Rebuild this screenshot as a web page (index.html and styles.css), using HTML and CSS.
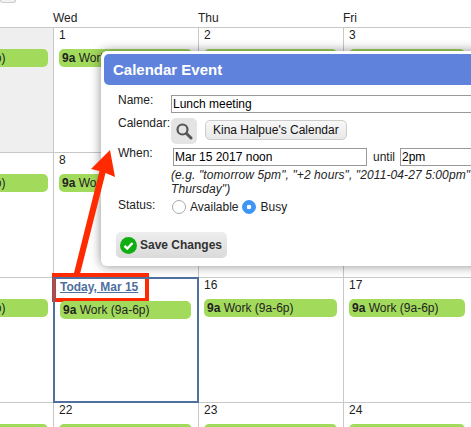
FILE: index.html
```html
<!DOCTYPE html>
<html lang="en">
<head>
  <meta charset="UTF-8" />
  <title>Calendar Event</title>
  <link rel="stylesheet" href="styles.css">
</head>

<body>
  <!-- MONTH GRID -->
  <div class="month">
    <div class="head"><div class="stub"></div></div>
    <div class="head day-name">Wed</div>
    <div class="head day-name">Thu</div>
    <div class="head day-name">Fri</div>

    <div class="cell first past"><div class="event"><b>9a</b> Work (9a-6p)</div></div>
    <div class="cell"><div class="num">1</div><div class="event"><b>9a</b> Work (9a-6p)</div></div>
    <div class="cell"><div class="num">2</div><div class="event"><b>9a</b> Work (9a-6p)</div></div>
    <div class="cell"><div class="num">3</div><div class="event"><b>9a</b> Work (9a-6p)</div></div>

    <div class="cell first"><div class="event"><b>9a</b> Work (9a-6p)</div></div>
    <div class="cell"><div class="num">8</div><div class="event"><b>9a</b> Work (9a-6p)</div></div>
    <div class="cell"><div class="num">9</div></div>
    <div class="cell"><div class="num">10</div></div>

    <div class="cell first"><div class="event"><b>9a</b> Work (9a-6p)</div></div>
    <div class="cell today"><a class="num today-link" href="#">Today, Mar 15</a><div class="event"><b>9a</b> Work (9a-6p)</div></div>
    <div class="cell"><div class="num">16</div><div class="event"><b>9a</b> Work (9a-6p)</div></div>
    <div class="cell"><div class="num">17</div><div class="event"><b>9a</b> Work (9a-6p)</div></div>

    <div class="cell first"><div class="event"><b>9a</b> Work (9a-6p)</div></div>
    <div class="cell"><div class="num">22</div><div class="event"><b>9a</b> Work (9a-6p)</div></div>
    <div class="cell"><div class="num">23</div><div class="event"><b>9a</b> Work (9a-6p)</div></div>
    <div class="cell"><div class="num">24</div><div class="event"><b>9a</b> Work (9a-6p)</div></div>
  </div>

  <!-- EVENT POPUP -->
  <div class="popup">
    <div class="popup-title">Calendar Event</div>
    <div class="popup-body">
      <div class="row row-name">
        <div class="label">Name:</div>
        <input class="text text-name" type="text" value="Lunch meeting" />
      </div>
      <div class="row row-calendar">
        <div class="label">Calendar:</div>
        <button class="search-btn" type="button">
          <svg width="18" height="18" viewBox="0 0 18 18">
            <circle cx="7.5" cy="7.5" r="5" fill="none" stroke="#555" stroke-width="2.2" />
            <path d="M11.5 11.5 L16 16" stroke="#555" stroke-width="3" stroke-linecap="round" />
          </svg>
        </button>
        <button class="calendar-btn" type="button">Kina Halpue's Calendar</button>
      </div>
      <div class="row row-when">
        <div class="label">When:</div>
        <input class="text text-when" type="text" value="Mar 15 2017 noon" />
        <span class="until">until</span>
        <input class="text text-until" type="text" value="2pm" />
      </div>
      <div class="hint">(e.g. "tomorrow 5pm", "+2 hours", "2011-04-27 5:00pm" to<br />Thursday")</div>
      <div class="row row-status">
        <div class="label">Status:</div>
        <input class="radio" type="radio" name="status" id="avail" />
        <label class="radio-text" for="avail">Available</label>
        <input class="radio" type="radio" name="status" id="busy" checked />
        <label class="radio-text" for="busy">Busy</label>
      </div>
      <button class="save-btn" type="button">
        <svg width="17" height="17" viewBox="0 0 17 17">
          <circle cx="8.5" cy="8.5" r="8.5" fill="#12ad12" />
          <path d="M4.5 8.8 L7.3 11.5 L12.5 6" fill="none" stroke="#fff" stroke-width="2.4" />
        </svg>
        Save Changes
      </button>
    </div>
  </div>

  <!-- ANNOTATION: red arrow + box round today's link -->
  <svg class="arrow" width="471" height="427" viewBox="0 0 471 427">
    <polygon points="110,150 115,177 105.5,173 80,274 74,273 99.5,171 91,169" fill="#ff2a00" />
  </svg>
  <div class="mark"></div>
</body>
</html>
```

FILE: styles.css
```css
* {
  margin: 0;
  padding: 0;
  box-sizing: border-box;
}

html,
body {
  height: 100%;
  overflow: hidden;
  font-family: 'Liberation Sans', Arial, sans-serif;
  font-size: 12px;
  background-color: #fff;
  color: #222;
}

/* 1) MONTH GRID */
.month {
  display: grid;
  grid-template-columns: 53px 145px 145px 1fr;
  grid-template-rows: 27px repeat(4, 125px);
  width: 471px;
}

.stub {
  width: 16px;
  height: 3px;
  background: #f2f2f2;
  border: 1px solid #ccc;
  border-top: none;
  border-radius: 0 0 4px 4px;
}

.day-name {
  padding-top: 11px;
  line-height: 14px;
}

.cell {
  border-top: 1px solid #c8c8c8;
  border-left: 1px solid #c8c8c8;
  overflow: hidden;
}

.cell.first {
  border-left: none;
  overflow: visible;
  padding-top: 21px;
}

.cell.past {
  background: #efefef;
}

.num {
  display: block;
  height: 15px;
  padding-left: 5px;
  line-height: 15px;
  color: #222;
}

.event {
  height: 18px;
  margin: 6px 6px 0 5px;
  padding-left: 3px;
  background: #a2da5c;
  border-radius: 5px;
  line-height: 18px;
  white-space: nowrap;
  overflow: hidden;
}

.cell.first .event {
  width: 132px;
  margin: 0 0 0 -84px;
}

/* today: blue box sits over the grid lines */
.today {
  z-index: 1;
  margin: 0 -1px -1px 0;
  padding-top: 1px;
  border: 2px solid #4f6f9f;
}

.today-link {
  font-weight: bold;
  color: #4f6f9f;
}

/* 2) POPUP */
.popup {
  position: absolute;
  top: 51px;
  left: 101px;
  width: 520px;
  height: 215px;
  padding: 3px;
  background: #fff;
  border-radius: 6px;
  box-shadow: 0 0 11px rgba(0, 0, 0, 0.45);
}

.popup-title {
  height: 31px;
  padding-left: 9px;
  background: #5f83dc;
  border-radius: 5px;
  color: #fff;
  font-size: 15px;
  font-weight: bold;
  line-height: 31px;
}

.popup-body {
  padding: 10px 0 0 14px;
}

.row {
  display: flex;
  align-items: flex-start;
}

.label {
  width: 53px;
  margin-top: -2px;
  line-height: 14px;
  white-space: nowrap;
}

.text {
  height: 18px;
  padding: 0 1px;
  border: 1px solid #999;
  font-family: inherit;
  font-size: 12px;
  color: #000;
}

.text-name {
  width: 400px;
}

.row-calendar {
  margin-top: 5px;
}

.search-btn {
  display: flex;
  justify-content: center;
  align-items: center;
  width: 26px;
  height: 26px;
  background: #e4e4e4;
  border: none;
  border-radius: 5px;
}

.calendar-btn {
  height: 20px;
  margin: 2px 0 0 8px;
  padding: 0 7px;
  background: linear-gradient(#f8f8f8, #e8e8e8);
  border: 1px solid #ccc;
  border-radius: 5px;
  font-family: inherit;
  font-size: 12px;
  color: #111;
}

.row-when {
  margin-top: 4px;
}

.text-when {
  width: 194px;
  margin-left: 2px;
}

.until {
  margin: 2px 5px 0 6px;
  line-height: 14px;
}

.text-until {
  width: 100px;
}

.hint {
  height: 28px;
  margin: 2px 0 0 53px;
  font-style: italic;
  letter-spacing: 0.1px;
  line-height: 14px;
  white-space: nowrap;
}

.row-status {
  margin-top: 4px;
}

.radio {
  appearance: none;
  width: 14px;
  height: 14px;
  margin-left: 1px;
  background: #fff;
  border: 1px solid #aaa;
  border-radius: 50%;
}

.radio:checked {
  background: radial-gradient(circle, #fff 0 2px, #3d95f5 2.6px);
  border-color: #3d95f5;
}

.radio-text {
  margin: 0 3px 0 4px;
  line-height: 14px;
}

.save-btn {
  display: flex;
  align-items: center;
  gap: 3px;
  width: 111px;
  height: 26px;
  margin: 18px 0 0 -2px;
  padding-left: 4px;
  background: linear-gradient(#eee, #dadada);
  border: none;
  border-radius: 5px;
  font-family: inherit;
  font-size: 12px;
  font-weight: bold;
  color: #333;
}

/* 3) RED ANNOTATION */
.arrow {
  position: absolute;
  top: 0;
  left: 0;
  pointer-events: none;
}

.mark {
  position: absolute;
  top: 273px;
  left: 52px;
  width: 97px;
  height: 29px;
  border: 4px solid #ff2a00;
}
```
